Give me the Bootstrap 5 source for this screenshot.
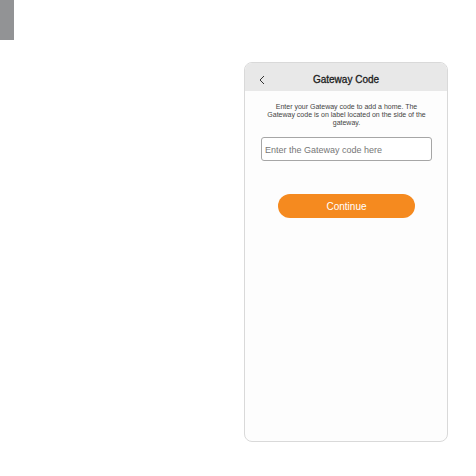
<!DOCTYPE html>
<html lang="en">
<head>
<meta charset="utf-8">
<meta name="viewport" content="width=device-width, initial-scale=1">
<title>Gateway Code</title>
<link href="https://cdn.jsdelivr.net/npm/bootstrap@5.3.0/dist/css/bootstrap.min.css" rel="stylesheet">
<style>
  body { font-family: "Liberation Sans", Arial, sans-serif; background: #fff; color: #222; }
  .page-tab { width: 14px; height: 40px; background: #929395; }
  .screen-wrap { padding: 62px 28px 34px 0; }
  .screen { width: 45%; min-width: 204px; background: #fdfdfd; border: 1px solid #d9d9d9; border-radius: 8px; }
  .screen-bar { height: 28px; padding-top: 6px; background: #e8e8e8; }
  .screen-title { font-size: 10px; line-height: 12px; font-weight: 400; color: #1c1c1c; -webkit-text-stroke: 0.3px #1c1c1c; }
  .back-btn { left: 9px; width: 16px; height: 20px; color: #333; line-height: 0; }
  .screen-body { padding: 12px 15px 12px 16px; }
  .intro { font-size: 7px; line-height: 8px; color: #444; margin-bottom: 10px; padding: 0 4px; }
  .code-input { height: 24px; padding: 1px 3px 0; font-size: 9px; line-height: 12px; border: 1px solid #a6a6a6; border-radius: 3px; background: #fff; color: #333; }
  .code-input::placeholder { color: #777; }
  .continue-btn { width: 80%; height: 24px; margin-top: 33px; padding: 1px 0 0; font-size: 10px; line-height: 12px; color: #fff; background: #f58a1f; border: 0; }
  .continue-btn:hover { color: #fff; background: #e27c14; }
</style>
<script src="https://cdn.jsdelivr.net/npm/bootstrap@5.3.0/dist/js/bootstrap.bundle.min.js" defer></script>
</head>
<body>
<div class="page-tab position-absolute top-0 start-0"></div>
<div class="screen-wrap min-vh-100 d-flex justify-content-end align-items-stretch">
  <main class="screen overflow-hidden d-flex flex-column">
    <header class="screen-bar position-relative d-flex align-items-center justify-content-center">
      <button type="button" class="back-btn btn position-absolute p-0 border-0" aria-label="Back">
        <svg width="8" height="10" viewBox="0 0 8 10" fill="none" stroke="currentColor" stroke-width="1" aria-hidden="true"><path d="M6 1 2 5l4 4"/></svg>
      </button>
      <h1 class="screen-title m-0">Gateway Code</h1>
    </header>
    <form class="screen-body d-flex flex-column align-items-center">
      <label for="code" class="intro text-center">Enter your Gateway code to add a home. The Gateway code is on label located on the side of the gateway.</label>
      <input id="code" type="text" class="code-input form-control" placeholder="Enter the Gateway code here">
      <button type="button" class="continue-btn btn rounded-pill">Continue</button>
    </form>
  </main>
</div>
</body>
</html>
